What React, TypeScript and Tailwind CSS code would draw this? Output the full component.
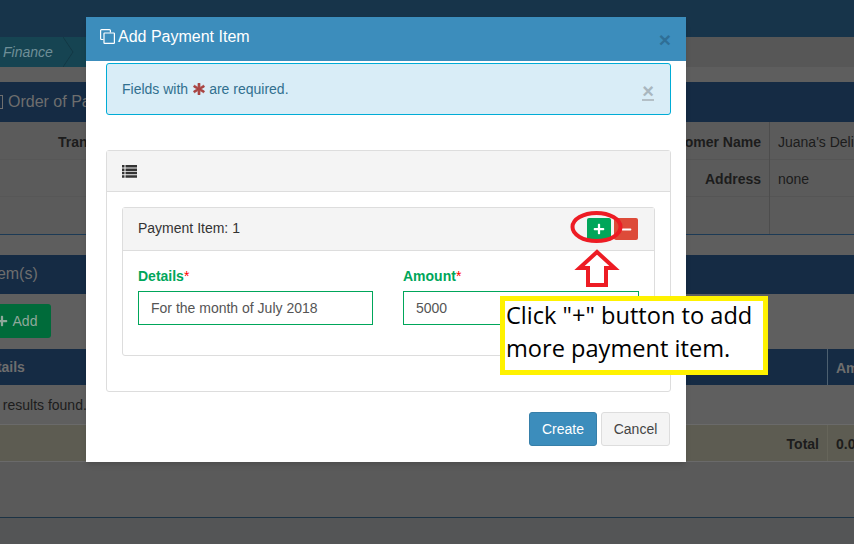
import React from "react"
import { FaAsterisk, FaMinus, FaPlus } from "react-icons/fa"

const CloneIcon = () => (
  <svg width="15" height="15" viewBox="0 0 15 15" fill="none" stroke="white" strokeWidth="1.2">
    <path d="M3.5 10.5H1.6a1 1 0 0 1-1-1V1.6a1 1 0 0 1 1-1h7.8a1 1 0 0 1 1 1v2" />
    <rect x="4" y="4" width="10.4" height="10.4" rx="0.6" />
  </svg>
)

const ListIcon = () => (
  <svg width="15" height="13" viewBox="0 0 15 13" fill="#333333">
    <path d="M0 0h2.5v2.5H0zM3.5 0H15v2.5H3.5zM0 3.4h2.5v2.5H0zM3.5 3.4H15v2.5H3.5zM0 6.8h2.5v2.5H0zM3.5 6.8H15v2.5H3.5zM0 10.2h2.5v2.5H0zM3.5 10.2H15v2.5H3.5z" />
  </svg>
)

// red ellipse and arrow drawn over the screenshot
const Annotation = () => (
  <svg className="absolute left-[565px] top-[208px]" width="70" height="82" viewBox="0 0 70 82" fill="none" stroke="#ed1c24">
    <ellipse cx="31.5" cy="19" rx="24" ry="14" strokeWidth="4" />
    <path d="M32 44 L49.5 60 H41 V77 H23 V60 H14.5 Z" strokeWidth="4" />
  </svg>
)

const Background = () => (
  <div className="flex h-[544px] w-[854px] flex-col overflow-hidden bg-[#585858] text-sm text-[#1c1c1c]">
    <div className="h-[37px] bg-[#17344a]" />
    <div className="flex h-[30px] bg-[#575757]">
      <div className="flex h-full w-[100px] items-center gap-[10px] bg-[#164452] pl-[3px] text-[14px] italic text-[#6f8f98]">
        Finance
        <svg width="11" height="30" viewBox="0 0 11 30" fill="none" stroke="#123845">
          <path d="M0 0 L10 15 L0 30" />
        </svg>
      </div>
    </div>
    <div className="h-[15px] bg-[#5e5e5e]" />
    <div className="flex h-[40px] items-center gap-[5px] bg-[#152b44] text-[16px] text-[#6e6e6e]">
      <span className="h-[14px] w-[3px] border-y border-r border-[#6e6e6e]" />
      Order of Payment
    </div>
    <div className="flex h-[113px] border-b border-[#1c3a55] bg-[#5b5b5b]">
      <div className="flex w-[86px] flex-col overflow-hidden whitespace-nowrap font-bold">
        <div className="h-[38px] border-b border-[#575757] pl-[58px] pt-[10px]">Transaction</div>
        <div className="h-[37px] border-b border-[#575757]" />
      </div>
      <div className="ml-auto flex w-[83px] flex-col font-bold whitespace-nowrap">
        <div className="flex h-[38px] justify-end border-b border-[#555555] pr-[8px] pt-[10px]">Customer Name</div>
        <div className="flex h-[37px] justify-end border-b border-[#555555] pr-[8px] pt-[9px]">Address</div>
      </div>
      <div className="flex w-[85px] flex-col overflow-hidden border-l border-[#4d4d4d] whitespace-nowrap">
        <div className="h-[38px] border-b border-[#555555] pl-[8px] pt-[10px]">Juana's Deli</div>
        <div className="h-[37px] border-b border-[#555555] pl-[8px] pt-[9px]">none</div>
      </div>
    </div>
    <div className="h-[20px] bg-[#5e5e5e]" />
    <div className="flex h-[39px] items-center bg-[#152b44] text-[16px] text-[#6e6e6e]">
      <span className="-ml-[12px]">Item(s)</span>
    </div>
    <div className="flex h-[55px] items-start bg-[#5f5f5f] pt-[10px]">
      <div className="-ml-[10px] flex h-[34px] w-[61px] items-center justify-center gap-[5px] rounded-[3px] bg-[#006b3a] pr-[8px] text-[#8fa89b]">
        <FaPlus size={12} />
        Add
      </div>
    </div>
    <div className="flex h-[36px] items-center justify-between bg-[#152b44] font-bold text-[#6e6e6e]">
      <span className="-ml-[21px]">Details</span>
      <span className="w-[27px] self-stretch overflow-hidden border-l border-[#4d6070] pl-[8px] pt-[9px] whitespace-nowrap">Amount</span>
    </div>
    <div className="flex h-[40px] items-start border-b border-[#6a6a6a] bg-[#5f5f5f] pt-[10px]">
      <span className="-ml-[19px] whitespace-nowrap">No results found.</span>
    </div>
    <div className="flex h-[37px] border-b border-[#6a6a6a] bg-[#5d5c52] font-bold">
      <span className="ml-auto pr-[8px] pt-[9px]">Total</span>
      <span className="w-[27px] overflow-hidden border-l border-[#66655a] pl-[8px] pt-[9px]">0.00</span>
    </div>
    <div className="h-[56px] border-b border-[#1c3345] bg-[#5a5a5a]" />
    <div className="flex-1 bg-[#545556]" />
  </div>
)

const Field = ({ label, value, width }: { label: string; value: string; width: string }) => (
  <div className={width}>
    <div className="h-[22px] text-[14px] leading-[15px] font-bold text-[#00a65a]">
      {label}
      <span className="font-normal text-[#ff0000]">*</span>
    </div>
    <div className="flex h-[34px] items-center border border-[#00a65a] px-3 text-[14px] text-[#555555]">{value}</div>
  </div>
)

const Modal = () => (
  <div className="absolute left-[86px] top-[17px] h-[445px] w-[600px] bg-white shadow-md">
    <div className="relative flex h-[44px] items-center gap-[3px] bg-[#3c8dbc] pl-[14px] pb-[5px] text-[16px] text-white">
      <CloneIcon />
      Add Payment Item
      <span className="absolute right-[15px] top-[12px] text-[21px] leading-[22px] font-bold text-[#2f6f96]">×</span>
    </div>
    <div className="pl-[20px] pr-[15px] pt-[2px]">
      <div className="relative flex h-[52px] items-center rounded-[3px] border border-[#00acd6] bg-[#d9edf7] pl-[15px] text-[14px] text-[#31708f]">
        Fields with
        <FaAsterisk size={12} stroke="currentColor" strokeWidth={30} className="ml-[5px] mr-[4px] text-[#a94442]" />
        are required.
        <span className="absolute right-[16px] top-[17px] h-[20px] border-b-2 border-[#b3bfc6] text-[20px] leading-[20px] font-bold text-[#a9b7bf]">×</span>
      </div>
      <div className="mt-[35px] h-[242px] rounded-[3px] border border-[#dddddd]">
        <div className="flex h-[41px] items-center border-b border-[#dddddd] bg-[#f4f4f4] pl-[15px]">
          <ListIcon />
        </div>
        <div className="mx-[15px] mt-[15px] h-[149px] rounded-[3px] border border-[#dddddd]">
          <div className="flex h-[43px] items-center justify-between border-b border-[#dddddd] bg-[#f4f4f4] pl-[15px] pr-[16px] text-[14px] text-[#333333]">
            <span className="pb-[2px]">Payment Item: 1</span>
            <div className="flex gap-[3px]">
              <div className="flex h-[22px] w-[24px] items-center justify-center rounded-[2px] bg-[#00a65a] text-white">
                <FaPlus size={12} />
              </div>
              <div className="flex h-[22px] w-[24px] items-center justify-center rounded-[2px] bg-[#dd4b39] text-white">
                <FaMinus size={11} />
              </div>
            </div>
          </div>
          <div className="flex gap-[30px] pl-[15px] pt-[18px]">
            <Field label="Details" value="For the month of July 2018" width="w-[235px]" />
            <Field label="Amount" value="5000" width="w-[236px]" />
          </div>
        </div>
      </div>
      <div className="mt-[20px] flex justify-end gap-[4px] pr-[1px] text-[14px]">
        <div className="flex h-[34px] w-[68px] items-center justify-center rounded-[3px] border border-[#367fa9] bg-[#3c8dbc] text-white">Create</div>
        <div className="flex h-[34px] w-[69px] items-center justify-center rounded-[3px] border border-[#dddddd] bg-[#f4f4f4] text-[#444444]">Cancel</div>
      </div>
    </div>
  </div>
)

export default function App() {
  return (
    <div className="relative h-[544px] w-[854px] overflow-hidden font-['Liberation_Sans',sans-serif]">
      <Background />
      <Modal />
      <Annotation />
      <div className="absolute left-[500px] top-[296px] h-[79px] w-[268px] overflow-hidden border-[5px] border-[#fff200] bg-white pl-[1px] font-['Open_Sans',sans-serif] text-[23.6px] leading-[33px] text-black">
        <div className="-mt-[2px] whitespace-nowrap">
          Click "+" button to add
          <br />
          more payment item.
        </div>
      </div>
    </div>
  )
}
